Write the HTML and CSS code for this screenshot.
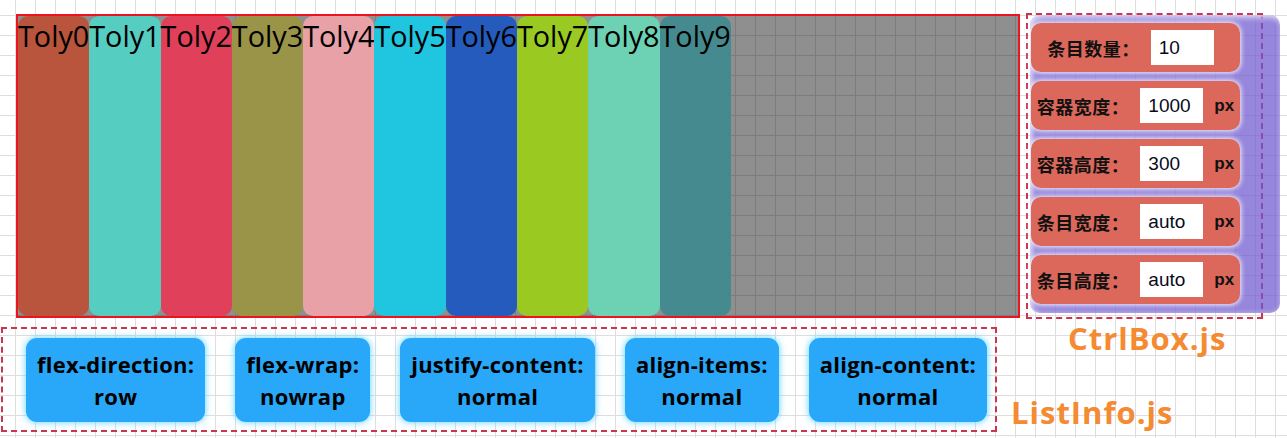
FILE: index.html
```html
<!DOCTYPE html>
<html lang="zh">
<head>
<meta charset="utf-8">
<title>Flex Demo</title>
<link rel="stylesheet" href="styles.css">
</head>
<body>
<div class="top">
  <div class="flexbox">
    <div class="item c0">Toly0</div>
    <div class="item c1">Toly1</div>
    <div class="item c2">Toly2</div>
    <div class="item c3">Toly3</div>
    <div class="item c4">Toly4</div>
    <div class="item c5">Toly5</div>
    <div class="item c6">Toly6</div>
    <div class="item c7">Toly7</div>
    <div class="item c8">Toly8</div>
    <div class="item c9">Toly9</div>
  </div>
  <div class="ctrl">
    <div class="panel">
      <div class="row"><span class="label">条目数量：</span><input class="field" value="10"></div>
      <div class="row"><span class="label">容器宽度：</span><input class="field" value="1000"><span class="unit">px</span></div>
      <div class="row"><span class="label">容器高度：</span><input class="field" value="300"><span class="unit">px</span></div>
      <div class="row"><span class="label">条目宽度：</span><input class="field" value="auto"><span class="unit">px</span></div>
      <div class="row"><span class="label">条目高度：</span><input class="field" value="auto"><span class="unit">px</span></div>
    </div>
  </div>
</div>
<div class="bottom">
  <div class="info">
    <div class="card">flex-direction:<br>row</div>
    <div class="card">flex-wrap:<br>nowrap</div>
    <div class="card">justify-content:<br>normal</div>
    <div class="card">align-items:<br>normal</div>
    <div class="card">align-content:<br>normal</div>
  </div>
  <div class="names">
    <div class="name name-ctrl">CtrlBox.js</div>
    <div class="name name-info">ListInfo.js</div>
  </div>
</div>
</body>
</html>
```
FILE: styles.css
```css
html, body {
  margin: 0;
  padding: 0;
}
body {
  width: 1287px;
  height: 438px;
  overflow: hidden;
  background-color: #fff;
  background-image:
    linear-gradient(#dedede 1px, transparent 1px),
    linear-gradient(90deg, #dedede 1px, transparent 1px);
  background-size: 20px 20px;
  background-position: 15px 15px;
  font-family: "Open Sans", "Noto Sans", sans-serif;
}
.top {
  display: flex;
  align-items: flex-start;
  padding: 14px 0 0 16px;
}
.flexbox {
  display: flex;
  width: 1000px;
  height: 300px;
  border: 2px solid #ec1420;
  background: rgba(0, 0, 0, 0.44);
  flex-shrink: 0;
}
.item {
  font-family: "Open Sans", sans-serif;
  font-size: 28.78px;
  color: #000;
  border-radius: 10px;
  white-space: nowrap;
}
.c0 { background: #b9543d; }
.c1 { background: #55cdc0; }
.c2 { background: #e0405a; }
.c3 { background: #9a9449; }
.c4 { background: #e9a1a8; }
.c5 { background: #20c5df; }
.c6 { background: #245bbd; }
.c7 { background: #9aca22; }
.c8 { background: #6dd1b3; }
.c9 { background: #458a8e; }

.ctrl {
  margin: -1px 0 0 6px;
  width: 233px;
  height: 302px;
  border: 2px dashed #cc3452;
  flex-shrink: 0;
}
.panel {
  margin-left: 2px;
  width: 250px;
  height: 298px;
  box-sizing: border-box;
  padding: 8px 0 0 1px;
  border-radius: 10px;
  background: rgba(110, 88, 206, 0.72);
  box-shadow: inset 2px 2px 6px rgba(255, 255, 255, 0.85);
  display: flex;
  flex-direction: column;
  gap: 9px;
}
.row {
  width: 209px;
  height: 49px;
  border-radius: 10px;
  background: #db685a;
  box-shadow: 0 0 5px 1px rgba(255, 255, 255, 0.9);
  display: flex;
  align-items: center;
  justify-content: center;
  gap: 11px;
}
.row:first-child {
  padding-right: 10px;
  box-sizing: border-box;
}
.label {
  font-family: "Noto Sans CJK SC", sans-serif;
  font-weight: 700;
  font-size: 18px;
  letter-spacing: 0.5px;
  color: #111;
  white-space: nowrap;
}
.field {
  width: 63px;
  height: 35px;
  box-sizing: border-box;
  border: none;
  padding: 0 0 0 8px;
  margin: 0;
  background: #fff;
  font-family: "Liberation Sans", Arial, sans-serif;
  font-size: 19px;
  color: #0a0a1a;
  outline: none;
}
.unit {
  font-family: "Liberation Sans", Arial, sans-serif;
  font-weight: 700;
  font-size: 17px;
  color: #111;
}

.bottom {
  display: flex;
  margin-top: 8px;
  padding-left: 1px;
}
.info {
  box-sizing: border-box;
  width: 996px;
  height: 105px;
  border: 2px dashed #c8364f;
  display: flex;
  align-items: flex-start;
  gap: 30px;
  padding: 9px 0 0 23px;
  flex-shrink: 0;
}
.card {
  background: #29a7f9;
  border-radius: 11px;
  box-shadow: 0 0 6px 1px rgba(90, 210, 255, 0.8);
  padding: 10px 11px;
  font-family: "Open Sans", sans-serif;
  font-weight: 700;
  font-size: 22px;
  letter-spacing: 0.25px;
  line-height: 32px;
  text-align: center;
  color: #000;
  white-space: nowrap;
}
.names {
  margin-left: 14px;
  display: flex;
  flex-direction: column;
  justify-content: space-between;
}
.name {
  font-family: "Open Sans", sans-serif;
  font-weight: 700;
  font-size: 31px;
  line-height: 30px;
  letter-spacing: 1px;
  color: #f48a32;
  white-space: nowrap;
}
.name-ctrl {
  margin: -4px 0 0 57px;
}
.name-info {
  margin-bottom: 5px;
}
```
